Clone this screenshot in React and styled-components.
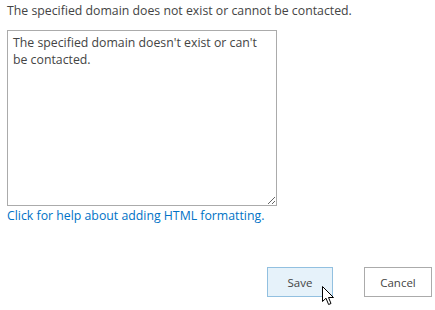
import React from "react";
import styled, { createGlobalStyle } from "styled-components";

const Global = createGlobalStyle`
  body {
    margin: 0;
    background: #fff;
    font-family: "Open Sans", "Liberation Sans", sans-serif;
    color: #444;
  }
`;

const Page = styled.div`
  width: 435px;
  height: 310px;
  box-sizing: border-box;
  padding: 2px 3px 0 7px;
  display: flex;
  flex-direction: column;
`;

const Message = styled.div`
  font-size: 12.3px;
  line-height: 17px;
  color: #444;
`;

const Field = styled.textarea`
  margin-top: 11px;
  width: 270px;
  height: 176px;
  box-sizing: border-box;
  padding: 3px 12px 3px 5px;
  border: 1px solid #ababab;
  font-family: inherit;
  font-size: 12.3px;
  line-height: 17px;
  color: #444;
  resize: both;
  outline: none;
  display: block;
`;

const HelpLink = styled.a`
  margin-top: 1px;
  font-size: 12.3px;
  line-height: 17px;
  color: #0072c6;
  text-decoration: none;
  cursor: pointer;
`;

const Actions = styled.div`
  margin-top: 43px;
  display: flex;
  justify-content: flex-end;
  gap: 31px;
`;

const Button = styled.button`
  position: relative;
  width: ${(p) => (p.primary ? "66px" : "68px")};
  height: 30px;
  box-sizing: border-box;
  border: 1px solid ${(p) => (p.primary ? "#92c0e0" : "#ababab")};
  background: ${(p) => (p.primary ? "#e6f2fa" : "#fff")};
  font-family: inherit;
  font-size: 11.5px;
  color: #444;
  padding: 0;
`;

const Pointer = styled.svg`
  position: absolute;
  left: 54px;
  top: 18px;
`;

export default function App() {
  return (
    <Page>
      <Global />
      <Message>The specified domain does not exist or cannot be contacted.</Message>
      <Field defaultValue="The specified domain doesn't exist or can't be contacted." />
      <HelpLink>Click for help about adding HTML formatting.</HelpLink>
      <Actions>
        <Button primary>
          Save
          <Pointer width="13" height="20" viewBox="0 0 13 20">
            <path
              d="M0.5 0.5 L0.5 15.5 L4 12.2 L6.6 18.5 L9 17.5 L6.5 11.5 L11.5 11.5 Z"
              fill="#fff"
              stroke="#000"
              strokeWidth="1"
              strokeLinejoin="miter"
            />
          </Pointer>
        </Button>
        <Button>Cancel</Button>
      </Actions>
    </Page>
  );
}
